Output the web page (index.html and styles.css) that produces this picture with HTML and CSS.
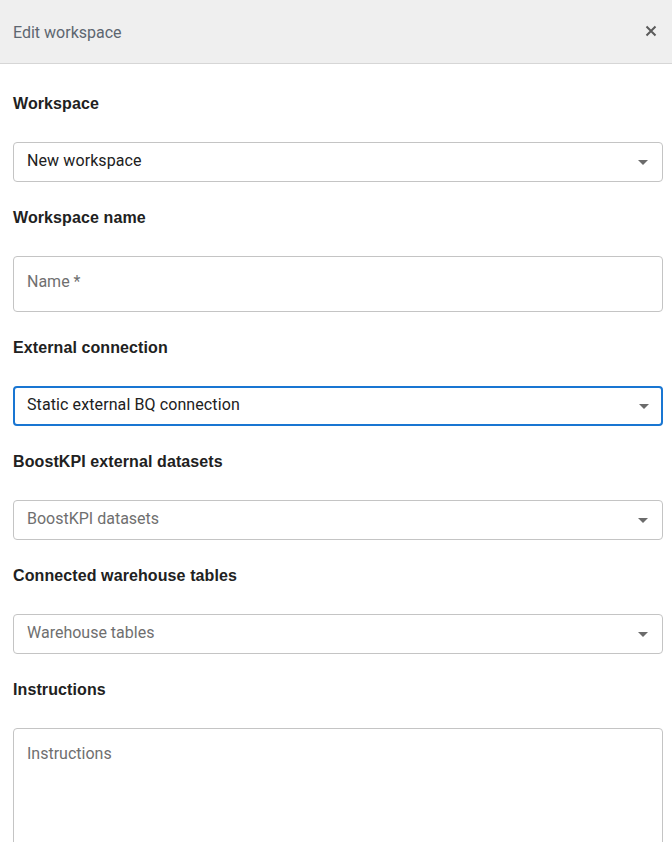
FILE: index.html
```html
<!DOCTYPE html>
<html lang="en">
<head>
<meta charset="utf-8">
<title>Edit workspace</title>
<link rel="stylesheet" href="styles.css">
</head>
<body>
<div class="dialog">
  <header class="dialog-header">
    <h1 class="dialog-title">Edit workspace</h1>
    <button class="close-btn" aria-label="Close">
      <svg width="12" height="12" viewBox="0 0 12 12"><path d="M1.5 1.5 L10.5 10.5 M10.5 1.5 L1.5 10.5" stroke="#5b5b5b" stroke-width="2" fill="none"/></svg>
    </button>
  </header>
  <form class="dialog-body">
    <div class="field">
      <label class="field-label">Workspace</label>
      <div class="select">
        <span class="select-value">New workspace</span>
        <span class="caret"></span>
      </div>
    </div>
    <div class="field">
      <label class="field-label">Workspace name</label>
      <div class="input">
        <span class="placeholder">Name *</span>
      </div>
    </div>
    <div class="field">
      <label class="field-label">External connection</label>
      <div class="select focused">
        <span class="select-value">Static external BQ connection</span>
        <span class="caret"></span>
      </div>
    </div>
    <div class="field">
      <label class="field-label">BoostKPI external datasets</label>
      <div class="select">
        <span class="placeholder">BoostKPI datasets</span>
        <span class="caret"></span>
      </div>
    </div>
    <div class="field">
      <label class="field-label">Connected warehouse tables</label>
      <div class="select">
        <span class="placeholder">Warehouse tables</span>
        <span class="caret"></span>
      </div>
    </div>
    <div class="field">
      <label class="field-label">Instructions</label>
      <div class="textarea">
        <span class="placeholder">Instructions</span>
      </div>
    </div>
  </form>
</div>
</body>
</html>
```
FILE: styles.css
```css
* { box-sizing: border-box; }
html, body { margin: 0; padding: 0; background: #fff; }
body {
  font-family: Roboto, "Liberation Sans", Arial, sans-serif;
  color: #212121;
  overflow: hidden;
  height: 842px;
}
.dialog { width: 672px; }
.dialog-header {
  height: 64px;
  background: #efefef;
  border-bottom: 1px solid #d6d6d6;
  display: flex;
  align-items: center;
  justify-content: space-between;
  padding: 0 13px 1px 13px;
}
.dialog-title {
  margin: 2px 0 0 0;
  font-size: 16px;
  font-weight: 400;
  color: #5d6670;
}
.close-btn {
  border: 0;
  background: transparent;
  padding: 0;
  width: 12px;
  height: 12px;
  display: flex;
  margin-right: 2px;
  margin-top: -1px;
}
.dialog-body {
  padding: 29px 9px 0 13px;
  display: flex;
  flex-direction: column;
}
.field { display: flex; flex-direction: column; margin-bottom: 25px; }
.field-label {
  font-family: "Liberation Sans", Arial, sans-serif;
  font-size: 16px;
  font-weight: 700;
  line-height: 22px;
  letter-spacing: 0.1px;
  color: #212121;
  margin-bottom: 27px;
}
.select, .input, .textarea {
  border: 1px solid #c4c4c4;
  border-radius: 4px;
  display: flex;
  align-items: center;
  padding: 0 13px;
  font-size: 16px;
}
.select { height: 40px; justify-content: space-between; padding-bottom: 3px; }
.select.focused { border: 2px solid #1976d2; padding: 0 12px 3px; }
.input { height: 56px; padding-bottom: 6px; }
.textarea { height: 140px; align-items: flex-start; padding-top: 15px; }
.select-value { color: #212121; letter-spacing: 0.1px; }
.placeholder { color: #6f6f6f; }
.caret {
  width: 0; height: 0;
  border-left: 5px solid transparent;
  border-right: 5px solid transparent;
  border-top: 5px solid #6b6b6b;
  margin-right: 1px;
  margin-top: 4px;
}
.select.focused .caret { margin-right: 0; }
```
